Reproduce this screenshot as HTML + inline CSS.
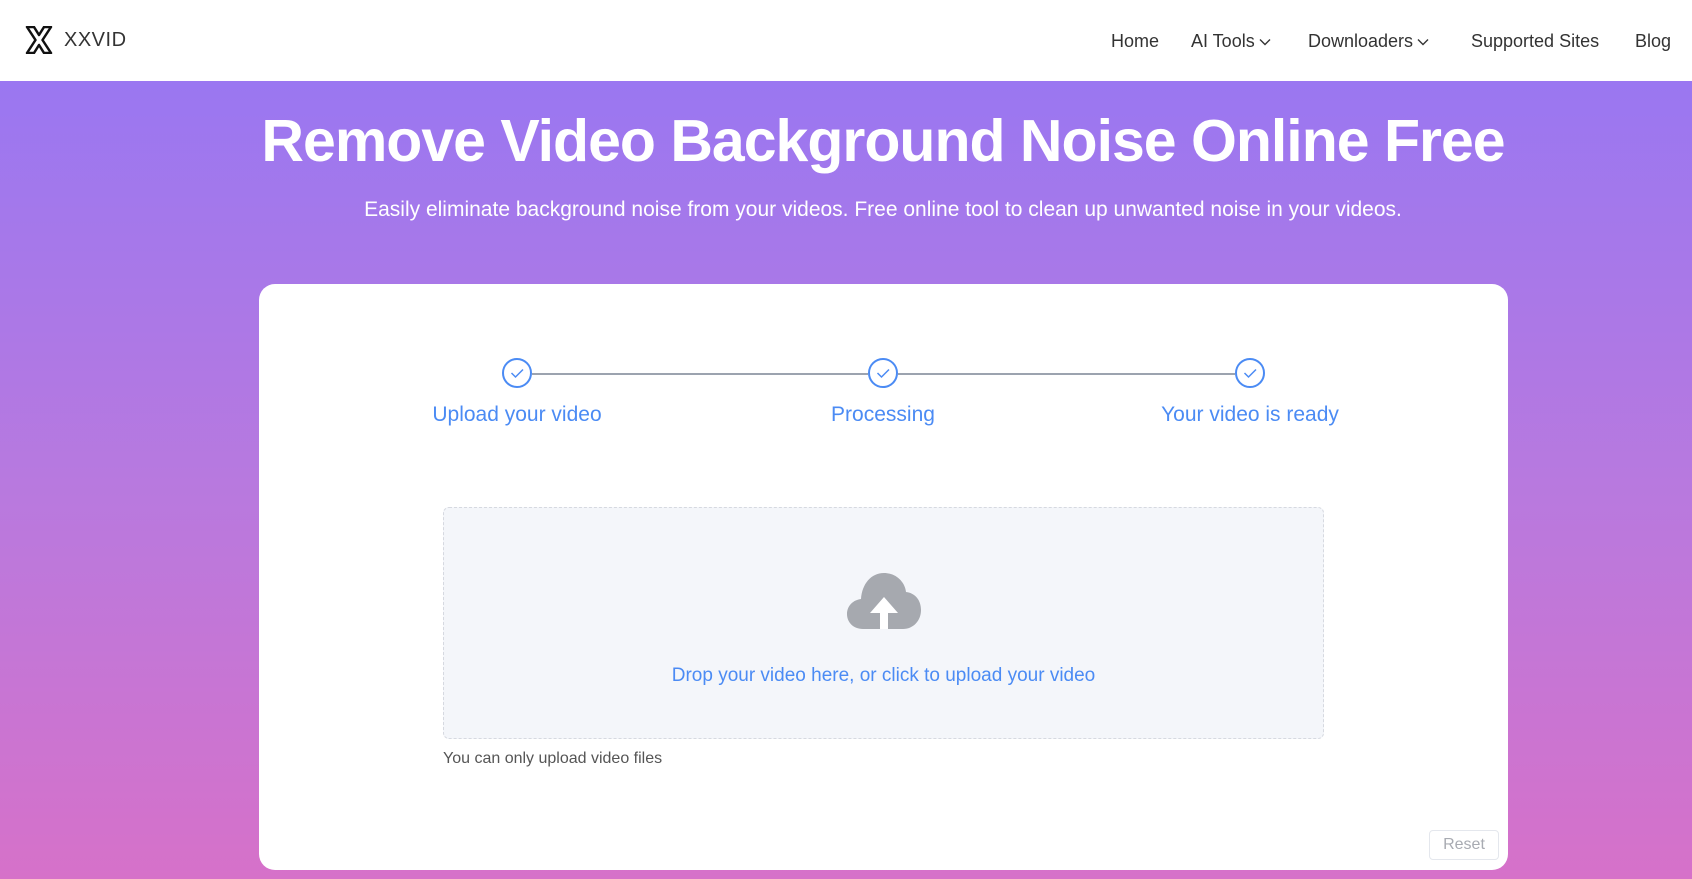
<!DOCTYPE html>
<html><head><meta charset="utf-8"><style>
*{margin:0;padding:0;box-sizing:border-box}
body{width:1692px;height:879px;overflow:hidden;font-family:"Liberation Sans",sans-serif;background:linear-gradient(180deg,#9a77f1 81px,#b979de 500px,#d671c9 879px);position:relative}
.hdr{position:absolute;left:0;top:0;width:1692px;height:81px;background:#fff}
.logo{position:absolute;left:25px;top:26px}
.brand{position:absolute;left:64px;top:29px;font-size:20px;color:#333;letter-spacing:0.5px}
.nav{position:absolute;top:31px;font-size:18px;color:#333}
.nav svg{vertical-align:middle;margin-left:4px}
h1{position:absolute;left:83px;width:1600px;top:107px;text-align:center;color:#fff;font-size:59px;font-weight:bold;letter-spacing:-1px;white-space:nowrap}
.sub{position:absolute;left:83px;width:1600px;top:198px;text-align:center;color:#fff;font-size:21px;white-space:nowrap}
.card{position:absolute;left:259px;top:284px;width:1249px;height:586px;background:#fff;border-radius:16px}
.line{position:absolute;top:373px;height:2px;background:#9ca3af}
.circ{position:absolute;width:30px;height:30px;border:2px solid #4b8bf4;border-radius:50%;background:#fff;top:358px}
.lbl{position:absolute;top:403px;font-size:21px;color:#4b8bf4;width:300px;text-align:center}
.drop{position:absolute;left:443px;top:507px;width:881px;height:232px;background:#f4f6fa;border:1px dashed #d6d9e0;border-radius:6px}
.dt{position:absolute;left:443px;width:881px;top:665px;text-align:center;color:#4b8bf4;font-size:19px}
.note{position:absolute;left:443px;top:750px;font-size:16px;color:#555}
.reset{position:absolute;left:1429px;top:830px;width:70px;height:30px;border:1px solid #e4e7ed;border-radius:4px;color:#a8abb2;font-size:16px;text-align:center;line-height:28px}
</style></head><body>
<div class="hdr">
<svg class="logo" width="28" height="28" viewBox="0 0 28 28"><path d="M2 1h7l5 8 5-8h7l-8.5 13L26 27h-7l-5-8-5 8H2l8.5-13z" fill="#fff" stroke="#111" stroke-width="2.5" stroke-linejoin="round"/></svg>
<div class="brand">XXVID</div>
<div class="nav" style="left:1111px">Home</div>
<div class="nav" style="left:1191px">AI Tools<svg width="12" height="8" viewBox="0 0 12 8"><path d="M1 1.5l5 5 5-5" fill="none" stroke="#333" stroke-width="1.4"/></svg></div>
<div class="nav" style="left:1308px">Downloaders<svg width="12" height="8" viewBox="0 0 12 8"><path d="M1 1.5l5 5 5-5" fill="none" stroke="#333" stroke-width="1.4"/></svg></div>
<div class="nav" style="left:1471px">Supported Sites</div>
<div class="nav" style="left:1635px">Blog</div>
</div>
<h1>Remove Video Background Noise Online Free</h1>
<div class="sub">Easily eliminate background noise from your videos. Free online tool to clean up unwanted noise in your videos.</div>
<div class="card"></div>
<div class="line" style="left:532px;width:336px"></div>
<div class="line" style="left:898px;width:337px"></div>
<div class="circ" style="left:502px"><svg width="26" height="26" viewBox="0 0 26 26"><path d="M7.5 13l4 4L19 9.5" fill="none" stroke="#4b8bf4" stroke-width="1.5"/></svg></div>
<div class="circ" style="left:868px"><svg width="26" height="26" viewBox="0 0 26 26"><path d="M7.5 13l4 4L19 9.5" fill="none" stroke="#4b8bf4" stroke-width="1.5"/></svg></div>
<div class="circ" style="left:1235px"><svg width="26" height="26" viewBox="0 0 26 26"><path d="M7.5 13l4 4L19 9.5" fill="none" stroke="#4b8bf4" stroke-width="1.5"/></svg></div>
<div class="lbl" style="left:367px">Upload your video</div>
<div class="lbl" style="left:733px">Processing</div>
<div class="lbl" style="left:1100px">Your video is ready</div>
<div class="drop"></div>
<svg style="position:absolute;left:847px;top:573px" width="74" height="56" viewBox="0 0 74 56"><path d="M16 56C6 56 0 49 0 41c0-8 6-14 14-15C15 11 24 0 37 0c12 0 21 9 22 19 9 1 15 8 15 18 0 11-8 19-18 19z" fill="#a6a9af"/><path d="M37 24L23 40h10v16h8V40h10z" fill="#fff"/></svg>
<div class="dt">Drop your video here, or click to upload your video</div>
<div class="note">You can only upload video files</div>
<div class="reset">Reset</div>
</body></html>
